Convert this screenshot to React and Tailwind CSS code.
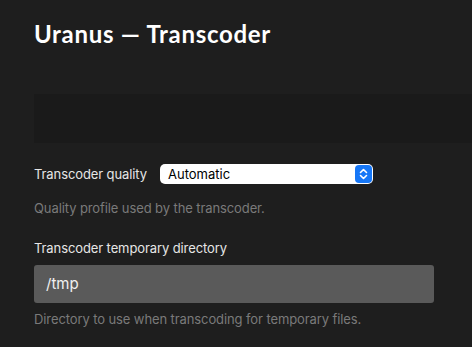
import React from 'react';

const Stepper = () => (
  <div className="w-[17px] h-[18px] rounded-[4px] bg-[#1677f7] flex items-center justify-center">
    <svg width="9" height="12" viewBox="0 0 9 12" fill="none" stroke="white" strokeWidth="1.6" strokeLinecap="round" strokeLinejoin="round">
      <path d="M1.5 4.5 L4.5 1.5 L7.5 4.5" />
      <path d="M1.5 7.5 L4.5 10.5 L7.5 7.5" />
    </svg>
  </div>
);

export default function App() {
  return (
    <div className="min-h-screen bg-[#1e1e1e] pl-[34px] pt-[19px] overflow-hidden font-['Inter',sans-serif]">
      <h1 className="text-[24px] leading-[30px] font-bold text-white font-['Lato',sans-serif] tracking-[0.7px]">
        Uranus — Transcoder
      </h1>

      <div className="mt-[45px] h-[49px] bg-[#1a1a1a]" />

      <div className="mt-[21px] flex items-center h-[20px]">
        <span className="text-[13px] leading-[16px] text-[#e6e6e6] w-[126px] tracking-[-0.1px]">Transcoder quality</span>
        <div className="w-[213px] h-[20px] bg-white rounded-[5px] flex items-center justify-between pl-[8px] pr-[1px]">
          <span className="text-[13px] leading-[16px] text-black">Automatic</span>
          <Stepper />
        </div>
      </div>

      <p className="mt-[16px] text-[13px] leading-[16px] text-[#7a7a7a] tracking-[-0.1px]">Quality profile used by the transcoder.</p>

      <p className="mt-[24px] text-[13px] leading-[16px] text-[#e6e6e6] tracking-[-0.1px]">Transcoder temporary directory</p>

      <div className="mt-[9px] w-[400px] h-[38px] bg-[#5a5a5a] rounded-[3px] flex items-center pl-[12px]">
        <span className="text-[15px] leading-[18px] text-[#f0f0f0]">/tmp</span>
      </div>

      <p className="mt-[8px] text-[13px] leading-[16px] text-[#7a7a7a] tracking-[-0.1px]">Directory to use when transcoding for temporary files.</p>
    </div>
  );
}
